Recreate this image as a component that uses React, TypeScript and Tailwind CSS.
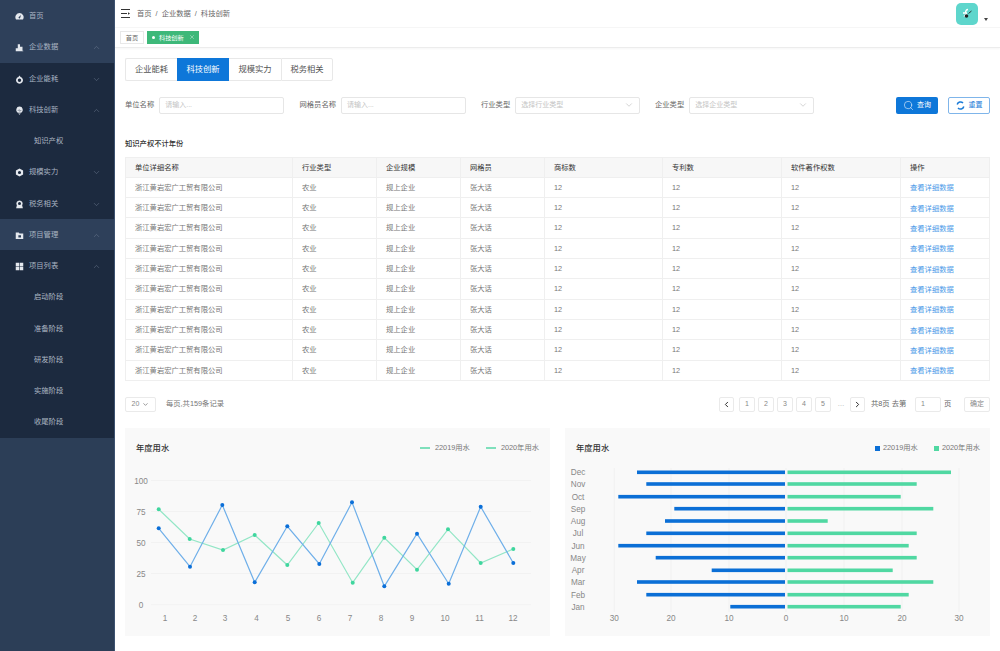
import React from "react";
import { ChevronUp, ChevronDown, ChevronLeft, ChevronRight, Search, X } from "lucide-react";

const P = (p: { children: React.ReactNode }) => (
  <svg viewBox="0 0 12 12" className="w-[9px] h-[9px] shrink-0" fill="#e4e8ee">{p.children}</svg>
);
const icons: Record<string, React.ReactNode> = {
  gauge: <P><path d="M6 1.5a5.5 5.5 0 0 0-5 7.800c.2.5.6.7 1 .7h8c.4 0 .8-.2 1-.7a5.500 5.500 0 0 0-5-7.800zM6 8.600a1.200 1.200 0 0 1-.5-2.300L8 4 6.900 7.500A1.200 1.200 0 0 1 6 8.600z" /></P>,
  bars: <P><path d="M1 11V7h2.700V1.500h3V5H10v5.200h1V11z" /></P>,
  drop: <P><path fillRule="evenodd" d="M6 .5 7.500 2.600A4.600 4.600 0 1 1 4.500 2.600zM6 4.700a2.300 2.300 0 1 0 0 4.600 2.300 2.300 0 0 0 0-4.600z" /></P>,
  bulb: <P><path fillRule="evenodd" d="M6 .8a4.400 4.400 0 0 0-2.400 8.100h4.800A4.400 4.400 0 0 0 6 .8zM4.200 10h3.600L6 11.600zM3.300 5.500h1.400l.8-1.300 1 2.400.7-1.100h1.500v.5H7.500L6.500 7.700l-1-2.400-.5.700H3.300z" /></P>,
  shield: <P><path fillRule="evenodd" d="M6 .6 10.800 3.200v5.600L6 11.400 1.200 8.800V3.200zM6 3.900a2.100 2.100 0 1 0 0 4.200 2.100 2.100 0 0 0 0-4.200z" /></P>,
  tax: <P><path fillRule="evenodd" d="M6 .6a4.200 4.200 0 0 1 3.500 6.500L10.500 11h-9l1-3.900A4.200 4.200 0 0 1 6 .6zM6 2.800a2 2 0 1 0 0 4 2 2 0 0 0 0-4z" /></P>,
  folder: <P><path fillRule="evenodd" d="M1 2h4l1 1.300h5V10.500H1zM4.500 5.500v3h3.500v-3z" /></P>,
  grid: <P><path d="M1 1h4.600v4.600H1zM6.400 1H11v4.600H6.400zM1 6.400h4.600V11H1zM6.400 6.400H11V11H6.400z" /></P>,
};

const Item = ({ icon, label, open, sub }: { icon?: string; label: string; open?: boolean; sub?: boolean }) => (
  <div className={`h-[31.25px] pt-[2px] flex items-center text-[7.3px] ${sub ? "pl-[34px] text-[#aeb8c4]" : "pl-[15px] text-[#a9b4c2]"}`}>
    {icon && <span className="mr-[5px] flex">{icons[icon]}</span>}
    <span>{label}</span>
    {!sub && (
      <span className="ml-auto mr-[13px] text-[#76859a]">
        {open === undefined ? null : open ? <ChevronUp size={9} strokeWidth={1.2} /> : <ChevronDown size={9} strokeWidth={1.2} />}
      </span>
    )}
  </div>
);

const Sidebar = () => (
  <aside className="w-[115px] shrink-0 h-full flex flex-col bg-[#1c2a3f] border-r border-[#3d5270]">
    <div className="bg-[#2e405a] h-[62.500px]">
      <Item icon="gauge" label="首页" />
      <Item icon="bars" label="企业数据" open />
    </div>
    <Item icon="drop" label="企业能耗" open={false} />
    <Item icon="bulb" label="科技创新" open />
    <Item sub label="知识产权" />
    <Item icon="shield" label="规模实力" open={false} />
    <Item icon="tax" label="税务相关" open={false} />
    <div className="bg-[#2e405a]"><Item icon="folder" label="项目管理" open /></div>
    <Item icon="grid" label="项目列表" open />
    <Item sub label="启动阶段" />
    <Item sub label="准备阶段" />
    <Item sub label="研发阶段" />
    <Item sub label="实施阶段" />
    <Item sub label="收尾阶段" />
    <div className="flex-1 bg-[#2c3e57]" />
  </aside>
);

const Header = () => (
  <div className="h-[28px] flex items-center pl-[6px] pr-[12px] border-b border-[#f6f6f6]">
    <svg width="10" height="9" viewBox="0 0 10 9" className="mr-[6px]" fill="#333">
      <path d="M0 0h9v1H0zM0 4h6v1H0zM7 3.200 9 4.500 7 5.800zM0 8h9v1H0z" />
    </svg>
    <div className="flex pt-[2px] text-[7.300px] text-[#666]">
      <span>首页</span><span className="mx-[4px]">/</span><span>企业数据</span><span className="mx-[4px]">/</span><span>科技创新</span>
    </div>
    <div className="ml-auto flex items-center">
      <div className="w-[22px] h-[22px] rounded-[5px] bg-[#5ed6cc] flex items-center justify-center">
        <svg width="14" height="14" viewBox="0 0 14 14">
          <path d="M8 2.500C6 2.500 5.500 4 5.500 6.500 M3 6h4 M4 9.500c1-1.500 2.500-2.500 3-2" stroke="#fff" strokeWidth="1.300" fill="none" />
          <circle cx="6.500" cy="9" r="1.800" fill="#222" />
          <path d="M8.500 6.500 11.500 4" stroke="#222" strokeWidth="0.900" />
        </svg>
      </div>
      <span className="ml-[6px] mt-[12px] w-0 h-0 border-x-[2px] border-t-[3px] border-x-transparent border-t-[#444]" />
    </div>
  </div>
);

const TagBar = () => (
  <div className="h-[19.500px] flex items-center gap-[3px] pl-[5px] border-b border-[#ececec] shadow-[0_1px_2px_rgba(0,0,0,0.04)]">
    <span className="w-[24px] h-[13px] border border-[#e8e8e8] text-[6.200px] text-[#666] flex items-center justify-center">首页</span>
    <span className="w-[52px] h-[13px] bg-[#3db879] text-[6.200px] text-white flex items-center pl-[5px]">
      <span className="w-[3px] h-[3px] rounded-full bg-white mr-[4px]" />科技创新
      <X size={6} className="ml-auto mr-[4px]" strokeWidth={1.500} />
    </span>
  </div>
);

const Tabs = () => {
  const base = "w-[52px] flex items-center justify-center";
  return (
    <div className="mt-[10px] flex h-[23px] w-[208px] text-[8.300px] text-[#555]">
      <div className={`${base} border border-r-0 border-[#e8e8e8] rounded-l-[2px]`}>企业能耗</div>
      <div className={`${base} bg-[#0e77d9] text-white`}>科技创新</div>
      <div className={`${base} border-y border-[#e8e8e8]`}>规模实力</div>
      <div className={`${base} border border-[#e8e8e8] rounded-r-[2px]`}>税务相关</div>
    </div>
  );
};

const Field = ({ label, ph, select, w }: { label: string; ph: string; select?: boolean; w: string }) => (
  <div className={`flex items-center ${w}`}>
    <span className="text-[7.300px] text-[#666] whitespace-nowrap mr-[5px] pt-[1px]">{label}</span>
    <div className="h-[17px] w-[125px] border border-[#e6e6e6] rounded-[2px] flex items-center px-[5px] text-[7px] text-[#c4c4c4]">
      <span className="pt-[1px]">{ph}</span>
      {select && <ChevronDown size={10} strokeWidth={1} className="ml-auto text-[#999]" />}
    </div>
  </div>
);

const Filters = () => (
  <div className="mt-[16px] h-[17px] flex items-center">
    <Field label="单位名称" ph="请输入..." w="w-[174.500px]" />
    <Field label="网格员名称" ph="请输入..." w="w-[181.500px]" />
    <Field label="行业类型" ph="选择行业类型" select w="w-[174px]" />
    <Field label="企业类型" ph="选择企业类型" select w="w-[159px]" />
    <button className="ml-auto h-[17px] w-[42px] bg-[#0e77d9] rounded-[2px] text-white text-[7px] flex items-center justify-center gap-[3px]">
      <Search size={11} strokeWidth={1.200} /><span className="pt-[1px]">查询</span>
    </button>
    <button className="ml-[10px] h-[17px] w-[42px] border border-[#7fb5ea] rounded-[2px] text-[#1b7bd8] text-[7px] flex items-center justify-center gap-[4px]">
      <svg width="9" height="9" viewBox="0 0 9 9" fill="none" stroke="#1b7bd8" strokeWidth="1.500">
        <path d="M1.200 3.500A3.400 3.400 0 0 1 7 2" />
        <path d="M7.800 5.500A3.400 3.400 0 0 1 2 7" />
      </svg>
      <span className="pt-[1px]">重置</span>
    </button>
  </div>
);

const cols = "grid grid-cols-[167px_84px_84px_84px_118px_119px_119px_1fr]";
const headers = ["单位详细名称", "行业类型", "企业规模", "网格员", "商标数", "专利数", "软件著作权数", "操作"];
const row = ["浙江黄岩宏广工贸有限公司", "农业", "规上企业", "张大话", "12", "12", "12", "查看详细数据"];

const Table = () => (
  <div className="mt-[5px] border-t border-x border-[#efefef]">
    <div className={`${cols} h-[20px] bg-[#f7f7f7] border-b border-[#efefef] text-[7.300px] text-[#333]`}>
      {headers.map((h, i) => (
        <div key={h} className={`flex items-center pt-[2px] pl-[9px] ${i < 7 ? "border-r border-[#efefef]" : ""}`}>{h}</div>
      ))}
    </div>
    {Array.from({ length: 10 }).map((_, r) => (
      <div key={r} className={`${cols} h-[20.350px] border-b border-[#efefef] text-[7.300px] text-[#777]`}>
        {row.map((c, i) => (
          <div key={i} className={`flex items-center pl-[9px] ${i < 7 ? "pt-[2px] border-r border-[#efefef]" : "pt-[3px] text-[#4d9be8]"}`}>{c}</div>
        ))}
      </div>
    ))}
  </div>
);

const Box = ({ children, w = "w-[16px]", cls = "" }: { children?: React.ReactNode; w?: string; cls?: string }) => (
  <div className={`${w} h-[15px] border border-[#eaeaea] rounded-[2px] flex items-center justify-center text-[7px] text-[#888] ${cls}`}>{children}</div>
);

const Pagination = () => (
  <div className="mt-[16px] h-[15px] flex items-center">
    <Box w="w-[31px]" cls="gap-[3px]">20<ChevronDown size={7} strokeWidth={2} className="text-[#555]" /></Box>
    <span className="ml-[10px] text-[7.300px] text-[#777]">每页,共159条记录</span>
    <div className="ml-auto flex items-center">
      <Box w="w-[15px]"><ChevronLeft size={9} strokeWidth={2.500} className="text-[#222]" /></Box>
      <div className="flex gap-[3px] ml-[5px]">
        <Box>1</Box><Box>2</Box><Box>3</Box><Box>4</Box><Box>5</Box>
      </div>
      <span className="mx-[6.500px] text-[7px] text-[#aaa] w-[6px] text-center">…</span>
      <Box w="w-[15px]"><ChevronRight size={9} strokeWidth={2.500} className="text-[#222]" /></Box>
      <span className="ml-[6px] text-[7.300px] text-[#666] w-[44px] whitespace-nowrap">共8页 去第</span>
      <Box w="w-[26px]" cls="justify-start pl-[5px]">1</Box>
      <span className="ml-[3px] text-[7.300px] text-[#666] w-[20px]">页</span>
      <Box w="w-[26px]" cls="text-[#666]">确定</Box>
    </div>
  </div>
);

const blue: [number, number][] = [[158.7,528.3],[190,566.7],[222.3,505],[254.7,582.3],[287.3,526.3],[319.3,564],[352,502.3],[384.3,586.3],[417,533.7],[448.7,583.7],[480.7,506.7],[513.3,563]];
const green: [number, number][] = [[158.7,509.3],[189.7,539],[223,550],[254.7,535],[287.3,565],[318.7,523],[352.7,582.7],[384.3,537.7],[417,569.7],[448,529.3],[480.7,563],[513.3,549]];
const toPts = (a: [number, number][]) => a.map((p) => p.join(",")).join(" ");
const font = "'Liberation Sans','Noto Sans CJK SC',sans-serif";

const LineChart = () => (
  <svg viewBox="125 468 425 168" className="w-[425px] h-[168px] block" style={{ fontFamily: font }}>
    {[[100,480.5],[75,511.5],[50,542.5],[25,573.5],[0,604.7]].map(([l, y]) => (
      <g key={l}>
        <line x1="151" x2="531" y1={y} y2={y} stroke="#f0f0f0" strokeWidth="0.800" />
        <text x="141" y={y + 3} textAnchor="middle" fontSize="8.200" fill="#888">{l}</text>
      </g>
    ))}
    {[165,195,225,256.500,288,319,350,381,412,445,479.500,513].map((x, i) => (
      <text key={i} x={x} y="620.500" textAnchor="middle" fontSize="8.200" fill="#888">{i + 1}</text>
    ))}
    <polyline points={toPts(green)} fill="none" stroke="#93e6c6" strokeWidth="1.200" />
    <polyline points={toPts(blue)} fill="none" stroke="#6fafe9" strokeWidth="1.200" />
    {green.map(([x, y], i) => <circle key={i} cx={x} cy={y} r="2" fill="#3fd69e" />)}
    {blue.map(([x, y], i) => <circle key={i} cx={x} cy={y} r="2" fill="#0b6fd8" />)}
  </svg>
);

const months = ["Dec","Nov","Oct","Sep","Aug","Jul","Jun","May","Apr","Mar","Feb","Jan"];
const barY = [472.3,484,496.7,508.7,521,533.3,545.7,557.7,570.3,582,594.7,606.7];
const left = [637,646.3,618.3,674.3,665,646.3,618.3,655.7,711.7,637,646.3,730.3];
const right = [951,916.7,900.7,933.3,827.7,916.7,908.7,916.7,892.7,933.3,908.7,900.7];

const BarChart = () => (
  <svg viewBox="565 468 425 168" className="w-[425px] h-[168px] block" style={{ fontFamily: font }}>
    {[[614.3,"30"],[671,"20"],[729,"10"],[786,"0"],[844,"10"],[902,"20"],[959,"30"]].map(([x, l]) => (
      <g key={`${x}`}>
        <line x1={x as number} x2={x as number} y1="464" y2="612" stroke="#f0f0f0" strokeWidth="0.800" />
        <text x={x as number} y="620.500" textAnchor="middle" fontSize="8.200" fill="#888">{l}</text>
      </g>
    ))}
    {months.map((m, i) => (
      <g key={m}>
        <text x="578" y={barY[i] + 3} textAnchor="middle" fontSize="8.200" fill="#888">{m}</text>
        <rect x={left[i]} y={barY[i] - 1.800} width={785 - left[i]} height="3.600" fill="#0b6fd6" />
        <rect x="787.500" y={barY[i] - 1.800} width={right[i] - 787.5} height="3.600" fill="#50d8a2" />
      </g>
    ))}
  </svg>
);

const Panel = ({ legend, children }: { legend: React.ReactNode; children: React.ReactNode }) => (
  <div className="w-[425px] h-[208px] bg-[#f9f9f9]">
    <div className="h-[40px] flex items-center pl-[11px] pr-[10px]">
      <span className="text-[8.300px] font-medium text-[#333]">年度用水</span>
      <div className="ml-auto pt-[1px] flex items-center text-[7.300px] text-[#777]">{legend}</div>
    </div>
    {children}
  </div>
);

export default function App() {
  return (
    <div className="w-full h-[651px] overflow-hidden flex bg-white" style={{ fontFamily: font }}>
      <Sidebar />
      <main className="flex-1 min-w-0 flex flex-col">
        <Header />
        <TagBar />
        <div className="pl-[10px] pr-[10px] flex flex-col">
          <Tabs />
          <Filters />
          <div className="mt-[24px] h-[14px] flex items-center text-[7.300px] text-[#333] font-medium">知识产权不计年份</div>
          <Table />
          <Pagination />
          <div className="mt-[16px] flex justify-between">
            <Panel legend={
              <>
                <span className="w-[10px] h-[2px] bg-[#7fe0bc] mr-[5px]" />22019用水
                <span className="ml-[16px] w-[10px] h-[2px] bg-[#7fe0bc] mr-[5px]" /><span className="mr-[1px]">2020年用水</span>
              </>
            }><LineChart /></Panel>
            <Panel legend={
              <>
                <span className="w-[5px] h-[5px] bg-[#0b6fd6] mr-[3px]" />22019用水
                <span className="ml-[16px] w-[5px] h-[5px] bg-[#50d8a2] mr-[3px]" />2020年用水
              </>
            }><BarChart /></Panel>
          </div>
        </div>
      </main>
    </div>
  );
}
